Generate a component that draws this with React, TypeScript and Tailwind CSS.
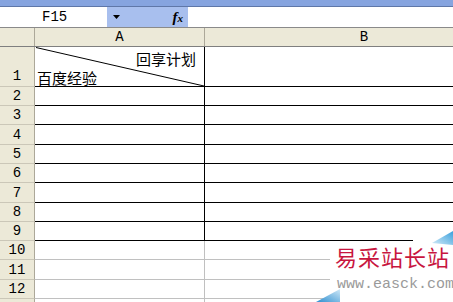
import React from "react";

const mono = { fontFamily: '"Liberation Mono", "DejaVu Sans Mono", monospace' };
const cjk = { fontFamily: '"Noto Sans CJK SC", "Noto Sans", sans-serif' };

const rowHeights = [
  "h-[19px]",
  "h-[19px]",
  "h-[20px]",
  "h-[19px]",
  "h-[19px]",
  "h-[20px]",
  "h-[19px]",
  "h-[19px]",
  "h-[19px]",
  "h-[20px]",
  "h-[19px]",
  "h-[19px]",
];

function RowHeader({ n }: { n: number }) {
  return (
    <div
      className="w-[35px] shrink-0 bg-[#ece9d8] border-r border-b border-r-[#aca899] border-b-[#cbc7b8] flex items-center justify-center text-[14px] text-black leading-none"
      style={mono}
    >
      {n <= 12 ? n : ""}
    </div>
  );
}

export default function App() {
  return (
    <div className="relative w-[453px] h-[302px] overflow-hidden bg-white">
      {/* top strip */}
      <div className="h-[7px] bg-[#86a4df] border-b border-[#5f77a8]" />
      {/* formula bar */}
      <div className="h-[21px] flex border-b border-[#8a8a8a] bg-white">
        <div
          className="w-[107px] shrink-0 flex items-center pl-[42px] text-[14px] text-black leading-none"
          style={mono}
        >
          F15
        </div>
        <div className="w-[81px] shrink-0 bg-[#a8bfee] flex items-center justify-between pl-[6px] pr-[5px]">
          <svg width="8" height="5" viewBox="0 0 8 5">
            <path d="M0 0 H7 L3.5 4 Z" fill="#000" />
          </svg>
          <span
            className="italic font-bold text-[15px] leading-none text-black"
            style={{ fontFamily: '"Liberation Serif", serif' }}
          >
            f<span className="text-[11px]">x</span>
          </span>
        </div>
        <div className="flex-1" />
      </div>
      {/* column headers */}
      <div className="h-[19px] flex bg-[#ece9d8] border-b border-[#7f7f7f] text-[14px] text-black leading-none" style={mono}>
        <div className="w-[35px] shrink-0 border-r border-[#aca899]" />
        <div className="w-[170px] shrink-0 border-r border-[#aca899] flex items-center justify-center">A</div>
        <div className="w-[318px] shrink-0 flex items-center justify-center">B</div>
      </div>
      {/* row 1 */}
      <div className="h-[40px] flex">
        <div
          className="w-[35px] shrink-0 bg-[#ece9d8] border-r border-b border-r-[#aca899] border-b-[#cbc7b8] flex items-end justify-center pb-[3px] text-[14px] text-black leading-none"
          style={mono}
        >
          1
        </div>
        <div className="relative w-[170px] shrink-0 border-r border-b border-black">
          <svg className="absolute inset-0" width="169" height="39" viewBox="0 0 169 39">
            <line x1="1" y1="0.5" x2="169" y2="39" stroke="#000" strokeWidth="1" />
          </svg>
          <div className="absolute right-[8px] top-[4px] text-[15px] leading-none text-black" style={cjk}>
            回享计划
          </div>
          <div className="absolute left-[2px] bottom-[1px] text-[15px] leading-none text-black" style={cjk}>
            百度经验
          </div>
        </div>
        <div className="flex-1 border-b border-black" />
      </div>
      {/* rows 2..13 */}
      {rowHeights.map((h, i) => {
        const n = i + 2;
        const dark = n <= 9;
        return (
          <div key={n} className={`${h} flex`}>
            <RowHeader n={n} />
            <div
              className={
                dark
                  ? "w-[170px] shrink-0 border-r border-b border-black"
                  : "w-[170px] shrink-0 border-r border-b border-[#c0c0c0]"
              }
            />
            <div className={dark ? "flex-1 border-b border-black" : "flex-1 border-b border-[#c0c0c0]"} />
          </div>
        );
      })}

      {/* watermark */}
      <div className="absolute left-[330px] top-[241px] right-0 bottom-0 bg-white" />
      <div className="absolute left-[413px] top-[236px] right-0 h-[8px] bg-white" />
      <svg className="absolute left-[430px] top-[231px]" width="23" height="14" viewBox="0 0 23 14">
        <defs>
          <linearGradient id="g1" x1="0" y1="1" x2="1" y2="0">
            <stop offset="0" stopColor="#d6ecf8" />
            <stop offset="1" stopColor="#3aa0dc" />
          </linearGradient>
        </defs>
        <path d="M2 12 L23 0 L23 14 Z" fill="url(#g1)" />
      </svg>
      <svg className="absolute left-[316px] top-[289px]" width="24" height="13" viewBox="0 0 24 13">
        <defs>
          <linearGradient id="g2" x1="0" y1="1" x2="1" y2="0">
            <stop offset="0" stopColor="#2f8fd0" />
            <stop offset="1" stopColor="#cfe8f7" />
          </linearGradient>
        </defs>
        <path d="M0 13 L24 0 L24 13 Z" fill="url(#g2)" />
      </svg>
      <div
        className="absolute left-[335px] top-[245px] text-[22px] leading-none text-[#c8163f] tracking-[1px]"
        style={cjk}
      >
        易采站长站
      </div>
      <div
        className="absolute left-[337px] top-[277px] text-[15px] leading-none text-[#9a9a9a]"
        style={mono}
      >
        www.easck.com
      </div>
    </div>
  );
}
